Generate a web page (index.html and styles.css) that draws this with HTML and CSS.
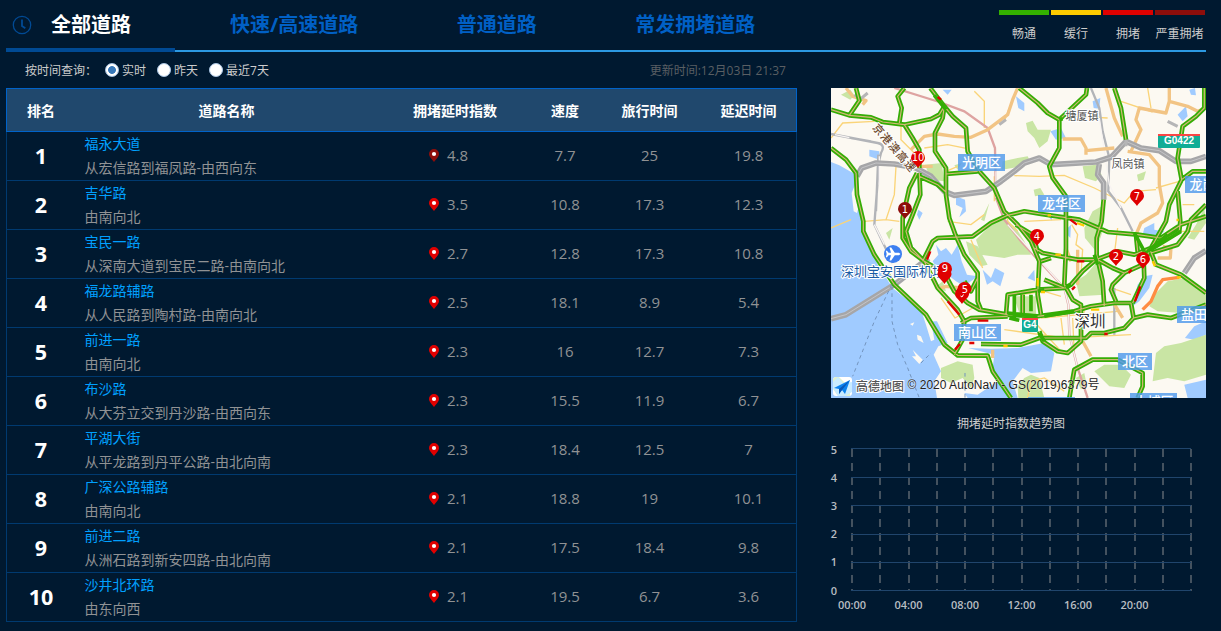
FILE: index.html
```
<!DOCTYPE html>
<html lang="zh-CN">
<head>
<meta charset="utf-8">
<title>道路拥堵排名</title>
<link rel="stylesheet" href="styles.css">
</head>
<body>
<svg width="0" height="0" class="symbols">
  <symbol id="pin" viewBox="0 0 10 13"><path d="M5 0a5 5 0 0 1 5 5c0 3-3 5-5 8C3 10 0 8 0 5a5 5 0 0 1 5-5z" fill="currentColor"/><circle cx="5" cy="5" r="2.1" fill="#fff"/></symbol>
</svg>
<header class="top">
  <nav class="tabs">
    <div class="tab active">
      <svg class="clock" width="20" height="20" viewBox="0 0 20 20"><circle cx="10" cy="10" r="8.7"/><path d="M10 4.5v6.5l3.3 2.3"/></svg>
      <span>全部道路</span>
    </div>
    <div class="tab">快速/高速道路</div>
    <div class="tab">普通道路</div>
    <div class="tab">常发拥堵道路</div>
  </nav>
  <div class="legend">
    <div class="level smooth">畅通</div>
    <div class="level slow">缓行</div>
    <div class="level jam">拥堵</div>
    <div class="level severe">严重拥堵</div>
  </div>
</header>
<main class="content">
  <section class="left">
    <div class="filter">
      <span class="caption">按时间查询：</span>
      <label class="opt"><i class="radio on"></i>实时</label>
      <label class="opt"><i class="radio"></i>昨天</label>
      <label class="opt"><i class="radio"></i>最近7天</label>
      <span class="updated">更新时间:12月03日 21:37</span>
    </div>
    <div class="table">
      <div class="row head"><b>排名</b><b>道路名称</b><b>拥堵延时指数</b><b>速度</b><b>旅行时间</b><b>延迟时间</b></div>
      <div class="row"><b>1</b><div class="road"><a>福永大道</a><span>从宏信路到福凤路-由西向东</span></div><span class="idx severe"><svg><use href="#pin"/></svg>4.8</span><span>7.7</span><span>25</span><span>19.8</span></div>
      <div class="row"><b>2</b><div class="road"><a>吉华路</a><span>由南向北</span></div><span class="idx"><svg><use href="#pin"/></svg>3.5</span><span>10.8</span><span>17.3</span><span>12.3</span></div>
      <div class="row"><b>3</b><div class="road"><a>宝民一路</a><span>从深南大道到宝民二路-由南向北</span></div><span class="idx"><svg><use href="#pin"/></svg>2.7</span><span>12.8</span><span>17.3</span><span>10.8</span></div>
      <div class="row"><b>4</b><div class="road"><a>福龙路辅路</a><span>从人民路到陶村路-由南向北</span></div><span class="idx"><svg><use href="#pin"/></svg>2.5</span><span>18.1</span><span>8.9</span><span>5.4</span></div>
      <div class="row"><b>5</b><div class="road"><a>前进一路</a><span>由南向北</span></div><span class="idx"><svg><use href="#pin"/></svg>2.3</span><span>16</span><span>12.7</span><span>7.3</span></div>
      <div class="row"><b>6</b><div class="road"><a>布沙路</a><span>从大芬立交到丹沙路-由西向东</span></div><span class="idx"><svg><use href="#pin"/></svg>2.3</span><span>15.5</span><span>11.9</span><span>6.7</span></div>
      <div class="row"><b>7</b><div class="road"><a>平湖大街</a><span>从平龙路到丹平公路-由北向南</span></div><span class="idx"><svg><use href="#pin"/></svg>2.3</span><span>18.4</span><span>12.5</span><span>7</span></div>
      <div class="row"><b>8</b><div class="road"><a>广深公路辅路</a><span>由南向北</span></div><span class="idx"><svg><use href="#pin"/></svg>2.1</span><span>18.8</span><span>19</span><span>10.1</span></div>
      <div class="row"><b>9</b><div class="road"><a>前进二路</a><span>从洲石路到新安四路-由北向南</span></div><span class="idx"><svg><use href="#pin"/></svg>2.1</span><span>17.5</span><span>18.4</span><span>9.8</span></div>
      <div class="row"><b>10</b><div class="road"><a>沙井北环路</a><span>由东向西</span></div><span class="idx"><svg><use href="#pin"/></svg>2.1</span><span>19.5</span><span>6.7</span><span>3.6</span></div>
    </div>
  </section>
  <section class="right">
    <svg class="map" width="375" height="310" viewBox="831 88 375 310">
      <rect x="831" y="88" width="375" height="310" fill="#fcf9f2"/>
      <g transform="translate(831 88) scale(.3333)">
        <g class="water">
          <path d="M0 222L25 232L75 260L72 290L62 315L68 370L78 375L82 360L97 400L92 430L115 465L140 530L185 600L240 645L270 665L285 710L300 760L310 755L300 700L318 700L350 765L322 775L308 800L330 850L310 880L318 930H0Z"/>
          <path d="M412 780L480 782L560 780L640 765L670 795L660 850L600 855L575 840L545 880L560 930H410L400 915L440 920L500 880L485 840L490 800Z"/>
          <path d="M375 325L402 335L405 370L385 388L395 360L375 350ZM315 470L330 490L345 480L362 500L380 470L392 520L408 560L440 565L400 595L375 580L350 560L340 520L318 540L305 520L322 500ZM455 545L480 570L492 540L520 555L508 595L485 580L468 590ZM335 5H362L350 20ZM555 25L580 45V70L562 60ZM115 185L145 190L145 215L115 205ZM262 365L275 375L265 395L258 380ZM658 130L690 120L705 150L675 155ZM970 405L940 420L935 440L985 445L1000 430L970 425ZM1040 80L1065 55L1070 85L1055 100ZM785 40L808 30L805 62L788 60ZM1075 5L1092 0L1095 22L1080 20ZM1060 890L1125 875V930H1070ZM1062 750L1090 715L1125 700V740L1090 755ZM920 590L940 565L965 560L955 600L925 640L905 655ZM700 430L720 410L718 450ZM590 570L610 545L612 580ZM655 388L665 380L662 398ZM0 895L20 930H0Z"/>
        </g>
        <g class="park">
          <path d="M435 455L480 410L520 390L555 420L580 460L600 500L560 500L520 510L450 500ZM515 220L560 210L590 205L600 225L545 240L512 245ZM282 230L332 225L340 280L300 275ZM30 20L58 5L70 22L58 35ZM585 105L605 98L620 125L660 125L650 160L625 180L610 150L590 130ZM755 235L795 230L812 260L795 280L762 270ZM760 420L785 370L812 355L815 430L795 490L762 450ZM918 260L945 250L938 275L922 280ZM608 305L628 300L640 320L612 325ZM330 840L380 820L425 830L430 870L420 900L395 870L360 885L330 870ZM405 460L440 475L470 530L450 535L415 500ZM735 580L765 560L800 520L815 560L820 620L745 625ZM955 655L975 615L1010 580L1060 570L1125 610V670L1050 675L980 670ZM975 795L1000 775L1050 765L1125 740V860L1060 880L1010 870L965 880ZM560 895L580 870L600 860L625 870L640 930H562ZM790 850L820 830L870 830L900 860L880 900L835 895ZM735 870L760 855L765 880L750 905ZM1120 360L1125 405L1090 455L1070 450L1095 410ZM548 625H615V680L565 675ZM165 435L185 420L175 455ZM370 232L392 225L380 245ZM460 400L450 395L475 345ZM310 600L335 580L345 610Z"/>
        </g>
        <path class="minor" d="M0 150L35 105L130 100M210 105L210 155L265 210M195 235L190 320L165 395L100 400M165 395L205 400M350 400L420 410L460 380M280 180L350 170L410 182L405 145M345 250L380 235M550 263L625 265L700 262L790 300L880 345L910 310L975 305M735 85L830 90M870 40L965 72M950 0L960 60M975 300L1045 280M1055 350L1090 350M580 400L690 395M722 410L740 440L735 470L755 485L750 560M590 430L585 450M430 10L460 40V120M535 60L520 100M330 630L372 690L425 660M420 455L455 540M520 725L700 750L900 740M595 685L690 790M630 690L860 670M690 690L700 770M725 690L730 800M760 660L755 740M570 620L640 610L690 625M840 600L900 620M1010 430H1120M590 930L600 880L640 870L700 910M860 420L850 500M530 370V400L560 430M490 265V340M0 420L60 395"/>
        <path class="rail" d="M190 0L325 42L400 70L470 120L492 180L495 330L520 395L570 460L630 525L700 600L712 650L715 740L740 840L770 930"/>
        <path class="rail white" d="M495 250V330M530 410L700 600L712 650L715 740L740 840"/>
        <path class="rail gray" d="M0 138L140 165Q165 170 150 195L145 215L130 410L185 525M780 0L805 60L815 130L835 210L832 310L870 360L905 430M850 600V740M60 150L120 160M142 200L135 370"/>
        <path class="rail white" d="M145 205V290M805 90L835 290L870 360M130 410L160 470M12 140L55 149"/>
        <g class="avenue"><path d="M240 185L280 145L320 138L370 145L420 148L470 125L490 110L530 80L545 35L560 0M45 0L65 25L105 38L95 50M270 235H305M825 0L850 90L875 145M695 153H750L765 180V200M765 188L850 180M1015 0V40L1005 75L925 60L915 95L930 125L900 190M890 190L955 200L985 235L985 290L995 345L980 375L930 405L915 440M1015 40L1070 55L1100 70L1125 60M325 602L345 595L390 600M485 785V810M845 640L875 690M755 760L780 805M705 480L720 520M980 510L1018 510L1020 480L995 475M740 485V590"/><path class="busy" d="M935 665L960 640L980 595L995 575L1045 568"/></g>
        <g class="expressway"><path id="hw" d="M78 265L92 240L135 225L190 228L255 240L300 265L340 310L370 322L465 310L510 280L550 250L580 225L625 210L660 230L795 222L840 208L885 160L930 180L985 188L1035 220L1080 220L1125 205M805 228L800 260L818 285V335M0 692L45 680L190 590L280 520M1060 555L1090 510L1125 488"/><use href="#hw" class="mid"/></g>
        <path class="expressway ramp" d="M70 20L90 32L110 15M505 110L525 95M1010 100L1040 115M280 530V505L295 520M885 140V175"/>
        <g class="traffic"><path id="tr" d="M0 65L55 82L120 88L155 102L220 110L300 93L325 80L340 55M55 82L85 38L75 0M205 105L212 60L200 25L220 0M220 110L245 150L265 185L265 240M298 0L340 55L365 85L405 120L410 190L445 250L490 300L520 370L560 410L600 460L625 520L620 620L630 680M340 55L335 90L312 135L312 190L345 240V320L355 390L375 445L400 500L440 555L440 640L450 665M0 180L45 215L75 255L78 320L97 400L97 430L130 500L190 590L285 680L340 770L380 802L470 803L485 850L540 930M258 255L235 300L215 390V450L240 490L280 520L320 600L380 665L400 700L395 755L370 800M265 255L268 320L245 380L225 430L240 480L280 520M265 265L320 290L345 312M275 520L305 460L320 450L425 445L480 405L530 382L580 370L630 378L700 388L745 395L830 432L920 440L990 450L1050 410L1125 385M555 410L605 440L620 490M345 258L440 250M565 0L620 45L650 75L685 95L765 20L768 0M685 95V180L655 235L665 270L705 325V480L700 590L725 635L750 650V760L710 795L680 790L635 760L625 730M850 0L870 60L885 155M818 335L812 400L797 450V500L815 580L820 655M1120 0V60L1095 85L1055 115L1040 210L1052 275L1015 350L1005 400L960 480M1052 275L1085 250H1125M1040 310L1048 400L1045 430L960 480L910 500L860 490L795 515L755 550L720 590L700 600L620 605L530 620L525 680M915 440L920 490M1125 350L1080 395L1070 430L1040 470L960 495M610 480L635 495L740 515H795M440 570L420 610L400 580M280 520L340 555L370 610L410 645L445 665L530 680L620 685L730 670L780 655L850 645H900L908 690L880 720L820 735H780L765 750L625 750L570 770L450 768M390 705L420 690L530 685M575 620V680M630 520L660 510M800 515L845 540L880 555L935 530L955 490M880 555L845 590L840 605L855 640M938 515L940 570L905 645M908 690L950 680L1020 690L1125 650M955 480L975 530L1050 560L1125 615M715 930L730 845L785 815H860L935 855V895L920 930M640 575L700 600"/><use href="#tr" class="core"/></g>
        <path class="junction" d="M530 675L620 685M535 690L565 697M550 620V690M600 620V670M625 735L640 760M950 490L1010 440M960 485L1050 430M910 435L940 490M790 500L800 530M310 22L345 65M685 95L695 92M705 600L720 590M620 610L640 605M640 685L730 670"/>
        <g class="jams">
          <path d="M320 27L330 35M718 395L738 410M440 698H472M350 640L385 680M288 515L298 490M415 765H430M372 785L387 768M912 640L928 595M723 605L732 596M820 738H830M738 520H760M893 555L902 545"/>
          <path class="warn" d="M738 405L760 413M650 382H660M620 570V595M630 612H642M780 665H805M965 520L972 535M517 774H530M1040 392V400M1038 568H1050M673 500H690"/>
        </g>
        <path class="ferry" d="M182 590L130 700L65 865M183 595V700L200 770L230 840L265 930M270 825L300 795M402 855V930"/>
        <path fill="#fcf9f2" d="M237 708L250 703L245 713ZM258 740L270 745L278 765L260 755ZM245 785L275 815L265 828L243 805L255 805Z"/>
      </g>
      <g class="cbox"><rect x="958" y="154" width="47" height="17"/><rect x="1038" y="195" width="47" height="17"/><rect x="954" y="324" width="47" height="17"/><rect x="1185" y="176" width="24" height="17"/><rect x="1177" y="306" width="30" height="17"/><rect x="1118" y="353" width="34" height="17"/><rect x="1130" y="393" width="47" height="17"/><rect x="1028" y="397" width="47" height="12"/></g>
      <g class="district"><text x="981.500" y="167">光明区</text><text x="1061.500" y="208">龙华区</text><text x="977.500" y="337">南山区</text><text x="1209" y="189">龙岗区</text><text x="1200.500" y="319">盐田区</text><text x="1135" y="366">北区</text><text x="1154" y="406">大埔区</text></g>
      <g class="town"><text x="1082" y="120">塘厦镇</text><text x="1128" y="168">凤岗镇</text></g>
      <text class="city" x="1090" y="327">深圳</text>
      <text class="airport" x="841" y="276">深圳宝安国际机场</text>
      <text class="highway" transform="translate(872 128) rotate(49)"><tspan x="0 12 24 36 48">京港澳高速</tspan></text>
      <g class="shield"><rect x="1158" y="134" width="42" height="14" rx="1"/><path d="M1158 134H1200V136H1158Z"/><text x="1179" y="144">G0422</text><rect x="1022" y="318" width="16" height="14" rx="1"/><path d="M1022 318H1038V320H1022Z"/><text x="1030" y="328">G4</text></g>
      <circle cx="893" cy="254" r="9" fill="#3d7ff0"/>
      <path d="M900.500 254L899 252.800L894.800 252.800L891.200 247.500H889.500L891 252.800H888.600L887 250.700H885.800L886.700 254L885.800 257.300H887L888.600 255.200H891L889.500 260.500H891.200L894.800 255.200H899Z" fill="#fff"/>
      <defs><path id="mark" d="M0-7a7 7 0 0 1 7 7C7 3.500 2.500 6 0 10C-2.500 6-7 3.500-7 0A7 7 0 0 1 0-7Z"/></defs>
      <g class="markers">
        <use href="#mark" x="918" y="158"/><use href="#mark" x="905" y="209" class="severe"/><use href="#mark" x="1137" y="196"/><use href="#mark" x="1037" y="236"/><use href="#mark" x="1116" y="256"/><use href="#mark" x="1143" y="259"/><use href="#mark" x="944.500" y="274"/><use href="#mark" x="945" y="269"/><use href="#mark" x="962" y="294"/><use href="#mark" x="964.500" y="289"/>
        <path d="M960.500 296L962 297L963.500 294.500" fill="none" stroke="#fff"/>
        <text x="918" y="161">10</text><text x="905" y="212.500">1</text><text x="1137" y="199.500">7</text><text x="1037" y="239.500">4</text><text x="1116" y="259.500">2</text><text x="1143" y="262.500">6</text><text x="945" y="272">9</text><text x="965" y="292.500">5</text>
      </g>
      <rect x="833" y="377" width="19" height="19" rx="3" fill="#fff"/><path d="M833 380Q833 377 836 377H839L850 388V396H838L833 389Z" fill="#e0f1cf"/><path d="M838 377L843 383L852 382V392L845 396H838L833 388V382Z" fill="#c8ebff"/><path d="M834 388L850 380L845 394L842 390L839 394V389Z" fill="#0b83ef"/><path d="M839 389L850 380L842 390L839 394Z" fill="#0757b8"/>
      <text class="amap" x="856" y="391" textLength="48">高德地图</text>
      <text class="copyright" x="907.500" y="389" textLength="192">© 2020 AutoNavi - GS(2019)6379号</text>
    </svg>
    <div class="chart-title">拥堵延时指数趋势图</div>
    <svg class="chart" width="390" height="180" viewBox="820 437 390 180">
      <path class="vlines" d="M852 449V591M880 449V591M909 449V591M937 449V591M965 449V591M993 449V591M1022 449V591M1050 449V591M1078 449V591M1106 449V591M1135 449V591M1163 449V591M1191 449V591"/>
      <path class="hlines" d="M851 448.500H1191M851 477.500H1191M851 505.500H1191M851 534.500H1191M851 562.500H1191M851 590.500H1191"/>
      <g class="axis"><text x="834" y="454">5</text><text x="834" y="482">4</text><text x="834" y="510">3</text><text x="834" y="538">2</text><text x="834" y="566">1</text><text x="834" y="595">0</text><text x="852" y="609">00:00</text><text x="908.500" y="609">04:00</text><text x="965" y="609">08:00</text><text x="1021.500" y="609">12:00</text><text x="1078" y="609">16:00</text><text x="1134.500" y="609">20:00</text></g>
    </svg>
  </section>
</main>
</body>
</html>
```
FILE: styles.css
```
* { box-sizing: border-box; }
body { margin: 0; width: 1221px; height: 631px; overflow: hidden; background: #001930; color: #ccc; font: 12px "Open Sans", "Noto Sans CJK SC", sans-serif; }
.symbols { position: absolute; }
.top { display: flex; justify-content: space-between; margin: 0 15px 0 6px; height: 52px; background: linear-gradient(#2c99e2, #2c99e2) bottom / 100% 2px no-repeat; }
.tabs { display: flex; }
.tab { padding: 1px 43.500px 0 55px; height: 52px; line-height: 48px; font-size: 20px; font-weight: 700; color: #0060c5; white-space: nowrap; }
.tab.active { display: flex; align-items: center; gap: 19px; width: 169px; padding: 1px 0 0 6px; color: #fff; border-bottom: 4px solid #004a94; }
.clock { flex: none; fill: none; stroke: #004a94; stroke-width: 1.300; }
.clock path { stroke-width: 1.800; }
.legend { display: flex; gap: 2px; padding: 10px 1px 0 0; }
.level { width: 50px; height: 34px; border-top: 5px solid; text-align: center; line-height: 37px; white-space: nowrap; }
.level.smooth { border-color: #34b000; }
.level.slow { border-color: #fecb00; }
.level.jam { border-color: #df0100; }
.level.severe { border-color: #8e0e0b; text-indent: -1px; }
.content { display: flex; gap: 23px; padding-left: 6px; }
.left { width: 791px; }
.filter { display: flex; align-items: center; height: 36px; padding: 0 11px 0 19px; white-space: nowrap; }
.caption { width: 80px; }
.opt { display: flex; align-items: center; gap: 3px; margin-right: 11px; height: 18px; }
.radio { width: 14px; height: 14px; border-radius: 50%; background: #fff; border: 1px solid #a9c5e4; }
.radio.on { background: radial-gradient(circle, #3778b9 3.500px, #fff 4.300px); }
.updated { margin-left: auto; color: #5a5f63; }
.row { display: grid; grid-template-columns: 68px 303px 154px 66px 103px 95px; align-items: center; justify-items: center; height: 49px; border: 1px solid #003a70; border-top: 0; color: #909294; font-size: 15px; }
.row > b { font-size: 21.500px; color: #fff; }
.row > b, .row > span { padding-bottom: 2px; }
.row > span { letter-spacing: -.1px; }
.row.head { height: 44px; background: #20486d; border: 1px solid #0063ca; }
.row.head > b { font-size: 14px; padding-bottom: 1px; }
.road { justify-self: start; padding-left: 9.500px; font-size: 14px; line-height: 24px; display: flex; flex-direction: column; }
.road a { color: #00a0ff; }
.row .idx { display: flex; align-items: center; gap: 8px; padding-right: 13px; }
.idx svg { width: 10px; height: 13px; color: #e00000; }
.idx.severe svg { color: #8e0e0b; }
.right { width: 390px; margin-top: 36px; padding-left: 11px; }
.map { display: block; }
.water path { fill: #a0cbff; }
.park path { fill: #c9e5a4; }
.minor { fill: none; stroke: #fad478; stroke-width: 4; }
.rail { fill: none; stroke: #dea3a1; stroke-width: 7; }
.rail.gray { stroke: #b2b4b8; }
.rail.white { stroke: #f8f4f2; stroke-width: 4; }
.avenue path { fill: none; stroke: #f2c484; stroke-width: 10; stroke-linejoin: round; }
.avenue path.busy { stroke: #ff8c42; }
.expressway { fill: none; stroke: #a6a6a8; stroke-width: 17; stroke-linejoin: round; }
.expressway .mid { stroke: #c5c5c7; stroke-width: 3; }
.expressway.ramp { stroke-width: 9; stroke: #b5b5b6; }
.traffic { fill: none; stroke: #34ad05; stroke-width: 14; stroke-linejoin: round; }
.traffic .core { stroke: #d3b878; stroke-width: 3.500; }
.junction { fill: none; stroke: #34ad05; stroke-width: 11; }
.jams { fill: none; stroke: #df0100; stroke-width: 7; }
.jams .warn { stroke: #fecb00; }
.ferry { fill: none; stroke: #7294bd; stroke-width: 3; stroke-dasharray: 11 10; }
.cbox rect { fill: #4f9aeb; fill-opacity: .82; }
.map text { font-family: "Noto Sans CJK SC", sans-serif; }
.district { fill: #fff; font-size: 13px; font-weight: 500; text-anchor: middle; }
.town, .city, .airport, .highway, .amap, .copyright { paint-order: stroke; stroke: #fff; stroke-width: 2px; }
.town { fill: #555; font-size: 11px; text-anchor: middle; }
.city { fill: #333; font-size: 15.500px; text-anchor: middle; }
.airport { fill: #195ba5; font-size: 13px; }
.highway { fill: #6e4a2e; font-size: 11px; font-weight: 500; }
.shield rect { fill: #10ad96; }
.shield path { fill: #fa4545; }
.map .shield text { fill: #fff; font: bold 10px "Liberation Sans", sans-serif; text-anchor: middle; }
.markers { fill: #df0000; }
.markers .severe { fill: #8e0e0b; }
.map .markers text { fill: #fff; font: 10px "DejaVu Sans", sans-serif; text-anchor: middle; }
.amap { fill: #555; font-size: 12px; font-weight: 500; }
.map .copyright { fill: #222; stroke-opacity: .45; stroke-width: 1px; font: 12px "Liberation Sans", "Noto Sans CJK SC", sans-serif; }
.chart-title { width: 108px; margin: 17px 0 0 126px; height: 18px; line-height: 18px; white-space: nowrap; }
.chart { display: block; margin: 4px 0 0 -11px; }
.vlines { fill: none; stroke: #44525f; stroke-width: 2; stroke-dasharray: 8 6; }
.hlines { fill: none; stroke: #20456c; }
.axis { fill: #b8bdc2; font-size: 11px; font-weight: 600; text-anchor: middle; }
```
